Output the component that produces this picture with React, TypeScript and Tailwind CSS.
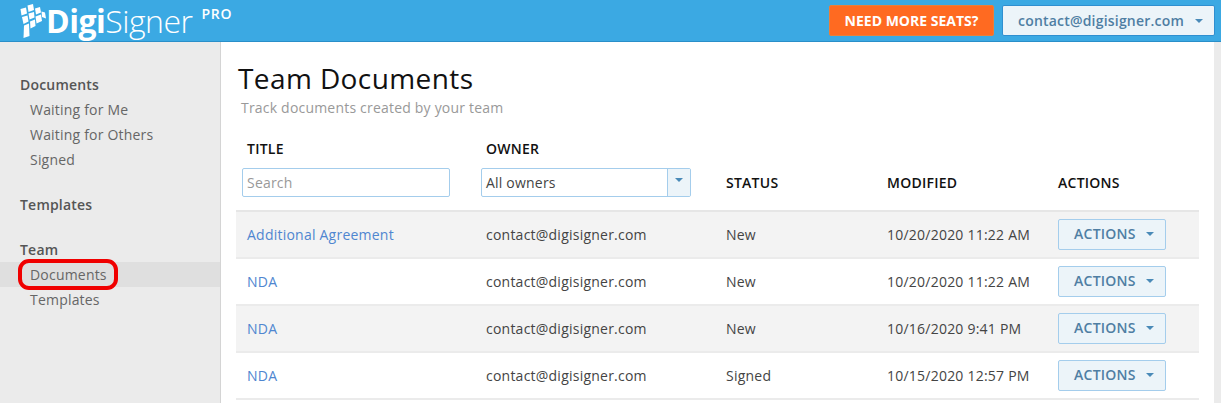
const font = { fontFamily: '"Open Sans", "Liberation Sans", sans-serif' }

const rows = [
  { title: 'Additional Agreement', status: 'New', modified: '10/20/2020 11:22 AM' },
  { title: 'NDA', status: 'New', modified: '10/20/2020 11:22 AM' },
  { title: 'NDA', status: 'New', modified: '10/16/2020 9:41 PM' },
  { title: 'NDA', status: 'Signed', modified: '10/15/2020 12:57 PM' },
]

function Caret({ className }: { className: string }) {
  return <span className={`inline-block h-0 w-0 border-x-[4px] border-t-[4px] border-x-transparent ${className}`} />
}

function Logo() {
  return (
    <svg width="26" height="34" viewBox="0 0 26 34" className="mr-[3px] mt-[1px]" fill="#fff">
      <polygon points="7.5,1.5 13,0 14,6 8.5,8" />
      <polygon points="0.5,5 6,3.5 7,9.5 1.5,11.5" />
      <polygon points="15,4.5 20,3 21,8.5 16,10.5" />
      <polygon points="8.5,9.5 14,8 14.5,13.5 9.5,15.5" />
      <polygon points="2,13 7.5,11.5 8.5,17.5 3.5,20" />
      <polygon points="21.5,7.5 25,8.5 26,14.5 22,13" />
      <polygon points="15.5,12.5 21,10.5 22,17 16.5,19.5" />
      <polygon points="10,17.5 15,15.5 15.5,22 10.5,24.5" />
      <polygon points="4,21.5 9,19.5 9.5,32 3.5,34" />
    </svg>
  )
}

function SideHead({ children, className = '' }: { children: string; className?: string }) {
  return <div className={`h-[25px] pl-5 text-[14px] font-semibold leading-[25px] tracking-[0.2px] text-[#555] ${className}`}>{children}</div>
}

function SideLink({ children, active }: { children: string; active?: boolean }) {
  return (
    <div className={`h-[25px] pl-[30px] text-[14px] leading-[25px] tracking-[0.2px] text-[#666] ${active ? 'bg-[#dfdfdf]' : ''}`}>
      {children}
    </div>
  )
}

function Th({ children }: { children: string }) {
  return <div className="pl-[11px] text-[14px] font-semibold tracking-[0.25px] text-[#111]">{children}</div>
}

export default function App() {
  return (
    <div style={font} className="flex h-[403px] w-[1221px] flex-col overflow-hidden bg-[#ebebeb]">
      <header className="flex h-[42px] shrink-0 items-center justify-between border-b border-[#2a8fc9] bg-[#3ba9e3] pl-5 pr-[6px]">
        <div className="flex items-center text-white">
          <Logo />
          <span className="ml-[-3px] text-[32px] font-bold leading-none tracking-[-0.5px]">Digi</span>
          <span className="text-[32px] font-light leading-none tracking-[-0.5px]">Signer</span>
          <span className="mb-[13px] ml-[9px] text-[14px] font-semibold leading-none tracking-[0.7px]">PRO</span>
        </div>
        <div className="flex items-center gap-2">
          <button className="flex h-[31px] w-[165px] items-center justify-center rounded-[2px] border border-[#e8803a] bg-[#ff6a21] text-[14px] font-bold text-white">
            NEED MORE SEATS?
          </button>
          <button className="flex h-[31px] w-[213px] items-center justify-between rounded-[2px] border border-[#2f8fd0] bg-[#ecf4f9] pl-[15px] pr-[11px] text-[14px] font-semibold tracking-[0.2px] text-[#4f7ea3]">
            contact@digisigner.com
            <Caret className="border-t-[#4a8ab8]" />
          </button>
        </div>
      </header>

      <div className="flex min-h-0 flex-1">
        <aside className="relative w-[221px] shrink-0 border-r border-[#d4d4d4] pt-[30px]">
          <SideHead>Documents</SideHead>
          <SideLink>Waiting for Me</SideLink>
          <SideLink>Waiting for Others</SideLink>
          <SideLink>Signed</SideLink>
          <SideHead className="mt-[20px]">Templates</SideHead>
          <SideHead className="mt-[20px]">Team</SideHead>
          <SideLink active>Documents</SideLink>
          <SideLink>Templates</SideLink>
          <div className="absolute left-[18px] top-[217px] h-[31px] w-[100px] rounded-[11px] border-4 border-[#f00000]" />
        </aside>

        <main className="w-[993px] shrink-0 bg-white pl-[15px] pr-[15px]">
          <h1 className="ml-[2px] mt-[17px] text-[28px] font-normal leading-[38px] tracking-[0.4px] text-[#111]">Team Documents</h1>
          <p className="ml-[5px] mt-[1px] text-[14px] leading-[19px] tracking-[0.2px] text-[#999]">Track documents created by your team</p>

          <div className="mt-[21px] grid h-[20px] grid-cols-[239px_240px_161px_171px_152px] items-center">
            <Th>TITLE</Th>
            <Th>OWNER</Th>
          </div>

          <div className="grid h-[54px] grid-cols-[239px_240px_161px_171px_152px] items-center border-b-2 border-[#e6e6e6] pb-[6px] pt-[2px]">
            <div className="pl-[6px]">
              <input
                placeholder="Search"
                style={font}
                className="h-[29px] w-[208px] rounded-[2px] border border-[#a4cdec] bg-white px-[4px] text-[14px] tracking-[0.2px] outline-none placeholder:text-[#999]"
              />
            </div>
            <div className="pl-[6px]">
              <div className="flex h-[29px] w-[210px] overflow-hidden rounded-[2px] border border-[#a4cdec]">
                <span className="flex-1 pl-[4px] text-[14px] leading-[27px] tracking-[0.2px] text-[#444]">All owners</span>
                <span className="flex w-[23px] justify-center border-l border-[#a4cdec] bg-[#ecf4f9] pt-[9px]">
                  <Caret className="border-t-[#4a8ab8]" />
                </span>
              </div>
            </div>
            <Th>STATUS</Th>
            <Th>MODIFIED</Th>
            <Th>ACTIONS</Th>
          </div>

          {rows.map((row, i) => (
            <div
              key={i}
              className={`grid h-[47px] grid-cols-[239px_240px_161px_171px_152px] items-center border-b-2 border-[#ebebeb] text-[14px] tracking-[0.23px] text-[#444] ${i % 2 === 0 ? 'bg-[#f3f3f3]' : 'bg-white'}`}
            >
              <div className="pl-[11px] text-[#4f86d0]">{row.title}</div>
              <div className="pl-[11px]">contact@digisigner.com</div>
              <div className="pl-[11px]">{row.status}</div>
              <div className="pl-[11px]">{row.modified}</div>
              <div className="pl-[11px]">
                <button className="flex h-[31px] w-[108px] items-center justify-between rounded-[2px] border border-[#a4cdec] bg-[#ecf4f9] pb-[2px] pl-[15px] pr-[11px] text-[14px] font-semibold tracking-[0.25px] text-[#4f7ea3]">
                  ACTIONS
                  <Caret className="border-t-[#4a8ab8]" />
                </button>
              </div>
            </div>
          ))}
        </main>
      </div>
    </div>
  )
}
